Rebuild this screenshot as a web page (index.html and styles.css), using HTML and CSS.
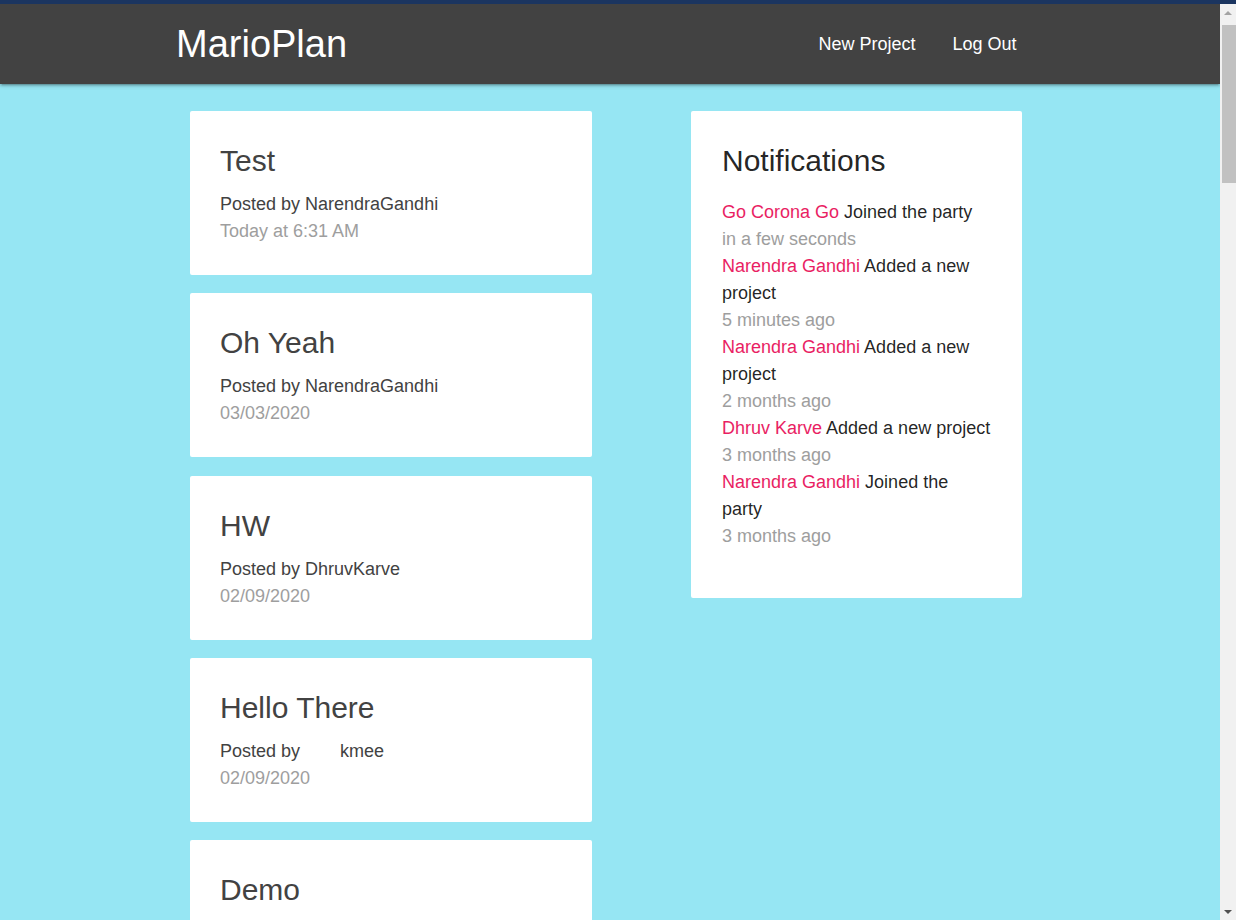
FILE: index.html
```html
<!DOCTYPE html>
<html lang="en">
<head>
<meta charset="utf-8">
<title>MarioPlan</title>
<link rel="stylesheet" href="styles.css">
</head>
<body>
<div class="topstrip"></div>
<div class="window">
  <div class="page">
    <nav class="navbar">
      <div class="nav-inner">
        <a class="brand" href="#">MarioPlan</a>
        <ul class="nav-links">
          <li><a href="#">New Project</a></li>
          <li><a href="#">Log Out</a></li>
        </ul>
      </div>
    </nav>
    <main class="dashboard">
      <section class="projects">
        <div class="card">
          <div class="card-content proj">
            <span class="card-title">Test</span>
            <p>Posted by NarendraGandhi</p>
            <p class="grey-text">Today at 6:31 AM</p>
          </div>
        </div>
        <div class="card">
          <div class="card-content proj">
            <span class="card-title">Oh Yeah</span>
            <p>Posted by NarendraGandhi</p>
            <p class="grey-text">03/03/2020</p>
          </div>
        </div>
        <div class="card">
          <div class="card-content proj">
            <span class="card-title">HW</span>
            <p>Posted by DhruvKarve</p>
            <p class="grey-text">02/09/2020</p>
          </div>
        </div>
        <div class="card">
          <div class="card-content proj">
            <span class="card-title">Hello There</span>
            <p>Posted by &nbsp;&nbsp;&nbsp;&nbsp;&nbsp;&nbsp;&nbsp;kmee</p>
            <p class="grey-text">02/09/2020</p>
          </div>
        </div>
        <div class="card">
          <div class="card-content proj">
            <span class="card-title">Demo</span>
            <p>Posted by NarendraGandhi</p>
            <p class="grey-text">02/09/2020</p>
          </div>
        </div>
      </section>
      <aside class="notes">
        <div class="card">
          <div class="card-content">
            <span class="card-title">Notifications</span>
            <ul class="notifications">
              <li><span class="pink-text">Go Corona Go</span> <span>Joined the party</span><div class="grey-text">in a few seconds</div></li>
              <li><span class="pink-text">Narendra Gandhi</span> <span>Added a new project</span><div class="grey-text">5 minutes ago</div></li>
              <li><span class="pink-text">Narendra Gandhi</span> <span>Added a new project</span><div class="grey-text">2 months ago</div></li>
              <li><span class="pink-text">Dhruv Karve</span> <span>Added a new project</span><div class="grey-text">3 months ago</div></li>
              <li><span class="pink-text">Narendra Gandhi</span> <span>Joined the party</span><div class="grey-text">3 months ago</div></li>
            </ul>
          </div>
        </div>
      </aside>
    </main>
  </div>
  <div class="scrollbar">
    <div class="sb-btn">
      <svg width="16" height="17" viewBox="0 0 16 17"><polygon points="4,11 8,7 12,11" fill="#a3a3a3"/></svg>
    </div>
    <div class="sb-track"><div class="sb-thumb"></div></div>
    <div class="sb-btn">
      <svg width="16" height="17" viewBox="0 0 16 17"><polygon points="4,7 12,7 8,11" fill="#505050"/></svg>
    </div>
  </div>
</div>
</body>
</html>
```

FILE: styles.css
```css
html, body {
  margin: 0;
  padding: 0;
  height: 100%;
  overflow: hidden;
}
body {
  font-family: "Liberation Sans", Arial, sans-serif;
  font-size: 18px;
  line-height: 27px;
  color: rgba(0, 0, 0, 0.87);
  background: #96e6f3;
}
.topstrip {
  height: 4px;
  background: #1b3560;
}
.window {
  display: flex;
  height: 916px;
}
.page {
  flex: 1;
  overflow: hidden;
  background: #96e6f3;
}
.navbar {
  height: 80px;
  background: #424242;
  box-shadow: 0 2px 2px 0 rgba(0,0,0,.14), 0 3px 1px -2px rgba(0,0,0,.12), 0 1px 5px 0 rgba(0,0,0,.2);
  position: relative;
  z-index: 1;
}
.nav-inner {
  margin-left: 176px;
  width: 859px;
  display: flex;
  justify-content: space-between;
  align-items: center;
  height: 80px;
}
.brand {
  color: #fff;
  text-decoration: none;
  font-size: 38px;
  line-height: 80px;
}
.nav-links {
  display: flex;
  list-style: none;
  margin: 0;
  padding: 0;
}
.nav-links a {
  display: block;
  color: #fff;
  text-decoration: none;
  font-size: 18px;
  line-height: 80px;
  padding: 0 18.5px;
}
.dashboard {
  margin-left: 190px;
  padding-top: 27px;
  display: grid;
  grid-template-columns: 402px 331px;
  column-gap: 99px;
  align-items: start;
}
.card {
  background: #fff;
  border-radius: 2px;
  margin-bottom: 18.25px;
}
.card-content {
  padding: 30px;
}
.card-content.proj {
  color: #424242;
}
.card-title {
  display: block;
  font-size: 30px;
  line-height: 40px;
  margin-bottom: 10px;
}
.card-content p {
  margin: 0;
}
.grey-text {
  color: #9e9e9e;
}
.pink-text {
  color: #e91e63;
}
.notifications {
  list-style: none;
  margin: 18px 0;
  padding: 0;
}
.notes .card-content {
  padding-left: 31px;
  padding-right: 29px;
}
.scrollbar {
  width: 16px;
  background: #f1f1f1;
  display: flex;
  flex-direction: column;
}
.sb-btn {
  height: 17px;
  display: flex;
}
.sb-track {
  flex: 1;
}
.sb-thumb {
  height: 158px;
  margin: 4px 0 0 2px;
  background: #c1c1c1;
}
```
